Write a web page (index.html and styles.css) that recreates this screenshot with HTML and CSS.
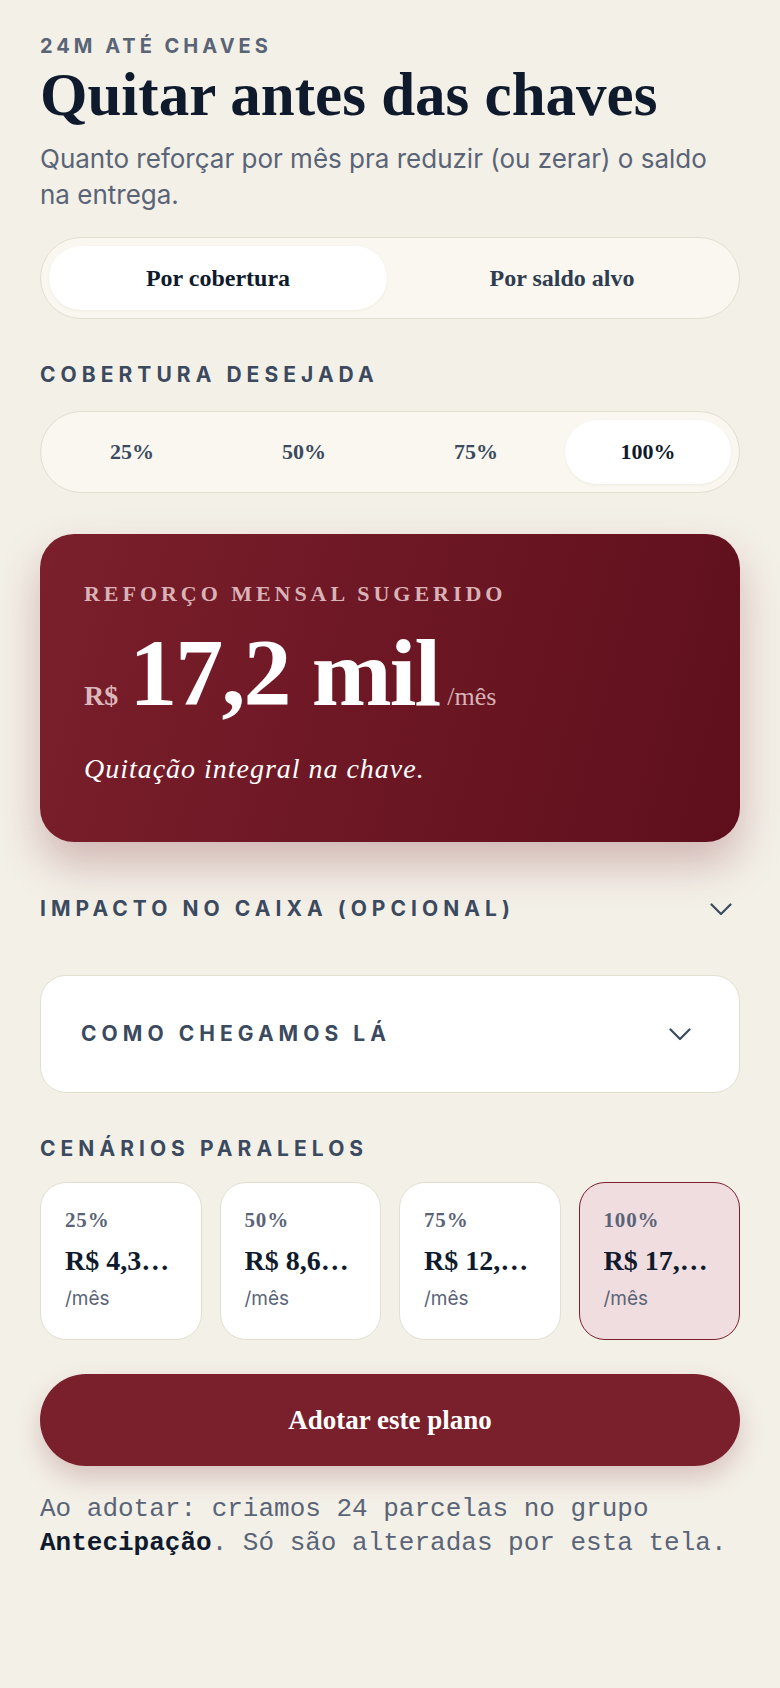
FILE: index.html
```html
<!DOCTYPE html>
<html lang="pt-BR">
<head>
<meta charset="utf-8">
<title>Quitar antes das chaves</title>
<link rel="stylesheet" href="styles.css">
</head>
<body>
<main class="page">
  <div class="eyebrow">24M ATÉ CHAVES</div>
  <h1 class="title">Quitar antes das chaves</h1>
  <p class="subtitle">Quanto reforçar por mês pra reduzir (ou zerar) o saldo na entrega.</p>

  <div class="seg seg-mode">
    <div class="seg-item active">Por cobertura</div>
    <div class="seg-item">Por saldo alvo</div>
  </div>

  <div class="section-label label-cobertura">COBERTURA DESEJADA</div>
  <div class="seg seg-pct">
    <div class="seg-item">25%</div>
    <div class="seg-item">50%</div>
    <div class="seg-item">75%</div>
    <div class="seg-item active">100%</div>
  </div>

  <section class="hero">
    <div class="hero-label">REFORÇO MENSAL SUGERIDO</div>
    <div class="hero-amount">
      <span class="hero-cur">R$</span>
      <span class="hero-value">17,2 mil</span>
      <span class="hero-unit">/mês</span>
    </div>
    <div class="hero-note">Quitação integral na chave.</div>
  </section>

  <div class="collapse-row">
    <span class="section-label">IMPACTO NO CAIXA (OPCIONAL)</span>
    <svg class="chev" width="22" height="13" viewBox="0 0 22 13"><path d="M1.5 1.5 L11 11 L20.5 1.5" fill="none" stroke="currentColor" stroke-width="2.2" stroke-linecap="round" stroke-linejoin="round"/></svg>
  </div>

  <div class="how-card">
    <span class="section-label">COMO CHEGAMOS LÁ</span>
    <svg class="chev" width="22" height="13" viewBox="0 0 22 13"><path d="M1.5 1.5 L11 11 L20.5 1.5" fill="none" stroke="currentColor" stroke-width="2.2" stroke-linecap="round" stroke-linejoin="round"/></svg>
  </div>

  <div class="section-label label-cenarios">CENÁRIOS PARALELOS</div>
  <div class="scenarios">
    <div class="scenario">
      <div class="sc-pct">25%</div>
      <div class="sc-value">R$ 4,3 mil</div>
      <div class="sc-unit">/mês</div>
    </div>
    <div class="scenario">
      <div class="sc-pct">50%</div>
      <div class="sc-value">R$ 8,6 mil</div>
      <div class="sc-unit">/mês</div>
    </div>
    <div class="scenario">
      <div class="sc-pct">75%</div>
      <div class="sc-value">R$ 12,9 mil</div>
      <div class="sc-unit">/mês</div>
    </div>
    <div class="scenario selected">
      <div class="sc-pct">100%</div>
      <div class="sc-value">R$ 17,2 mil</div>
      <div class="sc-unit">/mês</div>
    </div>
  </div>

  <div class="cta">Adotar este plano</div>

  <p class="note">Ao adotar: criamos 24 parcelas no grupo <strong>Antecipação</strong>. Só são alteradas por esta tela.</p>
</main>
</body>
</html>
```

FILE: styles.css
```css
* { box-sizing: border-box; }

html, body {
  margin: 0;
  padding: 0;
  background: #f3f0e8;
}

body {
  font-family: Inter, "Noto Sans", "Liberation Sans", sans-serif;
  color: #0f1b2d;
}

.page {
  padding: 34px 40px 60px;
  display: flex;
  flex-direction: column;
}

.eyebrow,
.section-label {
  font-family: Inter, "Liberation Sans", sans-serif;
  font-weight: 700;
  line-height: 24px;
  text-transform: uppercase;
}

.eyebrow {
  font-size: 20px;
  letter-spacing: 0.2em;
  color: #5a6477;
}

.section-label {
  font-size: 21px;
  letter-spacing: 0.24em;
  color: #3b4a5e;
}

.title {
  margin: 4px 0 0;
  font-family: "Liberation Serif", "Times New Roman", serif;
  font-weight: 700;
  font-size: 61px;
  line-height: 66px;
  color: #0f1b2d;
}

.subtitle {
  margin: 13px 0 0;
  max-width: 688px;
  font-size: 26px;
  line-height: 36px;
  color: #5a6477;
}

/* Segmented controls */
.seg {
  display: grid;
  gap: 6px;
  padding: 8px;
  background: #f9f7ef;
  border: 1px solid #e2ded0;
  border-radius: 999px;
}

.seg-mode {
  grid-template-columns: 1fr 1fr;
  margin-top: 24px;
}

.seg-pct {
  grid-template-columns: repeat(4, 1fr);
  margin-top: 24px;
}

.seg-item {
  height: 64px;
  display: flex;
  align-items: center;
  justify-content: center;
  border-radius: 999px;
  font-family: "Liberation Serif", "Times New Roman", serif;
  font-weight: 700;
  color: #2f3c51;
}

.seg-mode .seg-item { font-size: 24px; }
.seg-pct .seg-item { font-size: 22px; color: #3b4a5e; }

.seg .seg-item.active {
  background: #ffffff;
  color: #0f1b2d;
  box-shadow: 0 1px 3px rgba(60, 50, 30, 0.06);
}

.label-cobertura { margin-top: 44px; }

/* Hero card */
.hero {
  margin-top: 41px;
  height: 308px;
  padding: 47px 44px 0;
  border-radius: 34px;
  background: linear-gradient(105deg, #7b1f2c 0%, #6d1724 50%, #5e0f1b 100%);
  box-shadow: 0 22px 44px rgba(122, 31, 43, 0.28);
  color: #ffffff;
}

.hero-label {
  font-family: "Liberation Serif", "Times New Roman", serif;
  font-weight: 700;
  font-size: 22px;
  line-height: 26px;
  letter-spacing: 0.18em;
  color: #d9b3b7;
}

.hero-amount {
  margin-top: 18px;
  display: flex;
  align-items: baseline;
  gap: 11px;
  font-family: "Liberation Serif", "Times New Roman", serif;
}

.hero-cur {
  font-weight: 700;
  font-size: 28px;
  color: #dbb8bc;
}

.hero-value {
  font-weight: 700;
  font-size: 96px;
  line-height: 96px;
  letter-spacing: -0.02em;
  color: #ffffff;
  margin-right: -3px;
}

.hero-unit {
  font-size: 26px;
  color: #d9b3b7;
}

.hero-note {
  margin-top: 31px;
  font-family: "Liberation Serif", "Times New Roman", serif;
  font-style: italic;
  font-size: 28px;
  line-height: 34px;
  letter-spacing: 0.035em;
  color: #ffffff;
}

/* Collapsibles */
.collapse-row {
  margin-top: 55px;
  display: flex;
  align-items: center;
  justify-content: space-between;
  padding-right: 8px;
}

.chev {
  color: #3b4a5e;
  display: block;
}

.how-card {
  margin-top: 54px;
  height: 118px;
  display: flex;
  align-items: center;
  justify-content: space-between;
  padding: 0 48px 0 40px;
  background: #ffffff;
  border: 1.5px solid #e3dfd0;
  border-radius: 26px;
}

.label-cenarios { margin-top: 44px; }

/* Scenario cards */
.scenarios {
  margin-top: 21px;
  display: grid;
  grid-template-columns: repeat(4, 1fr);
  gap: 18px;
}

.scenario {
  height: 158px;
  padding: 25px 28px 0 24px;
  background: #ffffff;
  border: 1.5px solid #e3dfd0;
  border-radius: 26px;
  min-width: 0;
}

.scenario.selected {
  background: #f0dde0;
  border-color: #7a1f2b;
}

.sc-pct {
  font-family: "Liberation Serif", "Times New Roman", serif;
  font-weight: 700;
  font-size: 21px;
  line-height: 24px;
  letter-spacing: 0.04em;
  color: #5a6477;
}

.sc-value {
  margin-top: 12px;
  font-family: "Liberation Serif", "Times New Roman", serif;
  font-weight: 700;
  font-size: 28px;
  line-height: 34px;
  color: #0f1b2d;
  white-space: nowrap;
  overflow: hidden;
  text-overflow: ellipsis;
}

.sc-unit {
  margin-top: 9px;
  font-size: 19px;
  line-height: 24px;
  color: #5a6477;
}

/* CTA */
.cta {
  margin-top: 34px;
  height: 92px;
  display: flex;
  align-items: center;
  justify-content: center;
  border-radius: 999px;
  background: #7a1f2c;
  box-shadow: 0 12px 26px rgba(122, 31, 43, 0.22);
  font-family: "Liberation Serif", "Times New Roman", serif;
  font-weight: 700;
  font-size: 27px;
  color: #ffffff;
}

.note {
  margin: 26px 0 0;
  font-family: "Liberation Mono", "Courier New", monospace;
  font-size: 26px;
  line-height: 34px;
  color: #5a6477;
}

.note strong {
  color: #0f1b2d;
  font-weight: 700;
}
```
